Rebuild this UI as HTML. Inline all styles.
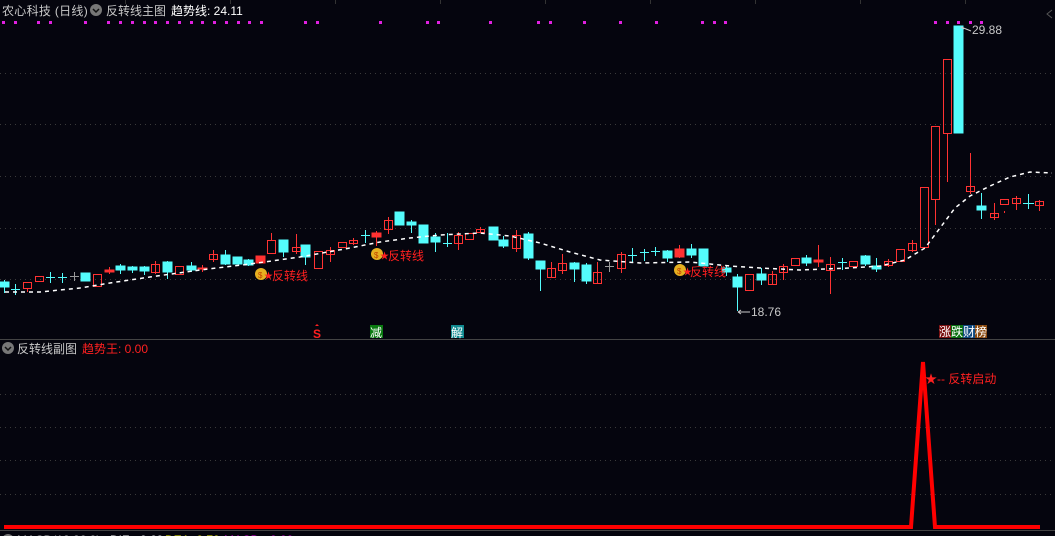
<!DOCTYPE html>
<html><head><meta charset="utf-8"><style>
html,body{margin:0;padding:0;background:#05050e;width:1055px;height:536px;overflow:hidden}
svg{display:block;font-family:"Liberation Sans","Noto Sans CJK SC",sans-serif}
</style></head><body>
<svg width="1055" height="536" viewBox="0 0 1055 536" xmlns="http://www.w3.org/2000/svg">
<rect width="1055" height="536" fill="#05050e"/>
<g stroke="#3a3a3a" stroke-dasharray="1 4" stroke-width="1">
<line x1="0" y1="73.5" x2="1055" y2="73.5"/><line x1="0" y1="124.5" x2="1055" y2="124.5"/>
<line x1="0" y1="176.5" x2="1055" y2="176.5"/><line x1="0" y1="228.5" x2="1055" y2="228.5"/>
<line x1="0" y1="279.5" x2="1055" y2="279.5"/>
<line x1="0" y1="394.5" x2="1055" y2="394.5"/><line x1="0" y1="427.5" x2="1055" y2="427.5"/>
<line x1="0" y1="460.5" x2="1055" y2="460.5"/><line x1="0" y1="494.5" x2="1055" y2="494.5"/>
</g>
<line x1="0" y1="339.5" x2="1055" y2="339.5" stroke="#444" />
<line x1="0" y1="530.5" x2="1055" y2="530.5" stroke="#444" />
<g stroke="#333"><line x1="125.5" y1="0" x2="125.5" y2="4"/><line x1="230.5" y1="0" x2="230.5" y2="4"/><line x1="335.5" y1="0" x2="335.5" y2="4"/><line x1="440.5" y1="0" x2="440.5" y2="4"/><line x1="545.5" y1="0" x2="545.5" y2="4"/><line x1="650.5" y1="0" x2="650.5" y2="4"/><line x1="755.5" y1="0" x2="755.5" y2="4"/><line x1="860.5" y1="0" x2="860.5" y2="4"/><line x1="965.5" y1="0" x2="965.5" y2="4"/></g>

<!-- header -->
<text x="2" y="15" fill="#c8c8c8" font-size="12" letter-spacing="0.3">农心科技 (日线)</text>
<circle cx="96" cy="10" r="6" fill="#777"/><path d="M93 9l3 3 3-3" stroke="#111" stroke-width="1.5" fill="none"/>
<text x="106" y="15" fill="#c8c8c8" font-size="12">反转线主图</text>
<text x="171" y="15" fill="#ffffff" font-size="12">趋势线: 24.11</text>
<g fill="#e020e0">
<rect x="2" y="21" width="3" height="3"/><rect x="14" y="21" width="3" height="3"/><rect x="37" y="21" width="3" height="3"/><rect x="49" y="21" width="3" height="3"/><rect x="84" y="21" width="3" height="3"/><rect x="107" y="21" width="3" height="3"/><rect x="119" y="21" width="3" height="3"/><rect x="131" y="21" width="3" height="3"/><rect x="143" y="21" width="3" height="3"/><rect x="154" y="21" width="3" height="3"/><rect x="166" y="21" width="3" height="3"/><rect x="178" y="21" width="3" height="3"/><rect x="190" y="21" width="3" height="3"/><rect x="201" y="21" width="3" height="3"/><rect x="213" y="21" width="3" height="3"/><rect x="225" y="21" width="3" height="3"/><rect x="237" y="21" width="3" height="3"/><rect x="248" y="21" width="3" height="3"/><rect x="260" y="21" width="3" height="3"/><rect x="304" y="21" width="3" height="3"/><rect x="316" y="21" width="3" height="3"/><rect x="379" y="21" width="3" height="3"/><rect x="426" y="21" width="3" height="3"/><rect x="437" y="21" width="3" height="3"/><rect x="489" y="21" width="3" height="3"/><rect x="537" y="21" width="3" height="3"/><rect x="549" y="21" width="3" height="3"/><rect x="583" y="21" width="3" height="3"/><rect x="619" y="21" width="3" height="3"/><rect x="655" y="21" width="3" height="3"/><rect x="701" y="21" width="3" height="3"/><rect x="713" y="21" width="3" height="3"/><rect x="724" y="21" width="3" height="3"/><rect x="934" y="21" width="3" height="3"/><rect x="946" y="21" width="3" height="3"/><rect x="957" y="21" width="3" height="3"/><rect x="969" y="21" width="3" height="3"/><rect x="980" y="21" width="3" height="3"/>
</g>

<!-- cyan candles -->
<g stroke="#54fcfc" fill="#54fcfc" stroke-width="1">
<line x1="4.5" y1="280" x2="4.5" y2="293"/><rect x="0" y="282" width="9" height="5"/>
<line x1="15.5" y1="284" x2="15.5" y2="295"/><line x1="11" y1="289.5" x2="20" y2="289.5"/>
<line x1="50.5" y1="272" x2="50.5" y2="283"/><line x1="46" y1="277.5" x2="55" y2="277.5"/>
<line x1="62.5" y1="273" x2="62.5" y2="283"/><line x1="58" y1="277.5" x2="67" y2="277.5"/>
<rect x="81" y="273" width="9" height="8"/>
<line x1="120.5" y1="264" x2="120.5" y2="274"/><rect x="116" y="266" width="9" height="4"/>
<line x1="132.5" y1="266" x2="132.5" y2="273"/><rect x="128" y="267" width="9" height="3"/>
<line x1="144.5" y1="266" x2="144.5" y2="275"/><rect x="140" y="267" width="9" height="4"/>
<line x1="167.5" y1="261" x2="167.5" y2="279"/><rect x="163" y="262" width="9" height="10"/>
<line x1="191.5" y1="262" x2="191.5" y2="272"/><rect x="187" y="266" width="9" height="4"/>
<line x1="225.5" y1="250" x2="225.5" y2="265"/><rect x="221" y="255" width="9" height="9"/>
<rect x="233" y="257" width="9" height="7"/>
<line x1="248.5" y1="259" x2="248.5" y2="266"/><rect x="244" y="260" width="9" height="5"/>
<line x1="283.5" y1="240" x2="283.5" y2="257"/><rect x="279" y="240" width="9" height="12"/>
<line x1="305.5" y1="245" x2="305.5" y2="265"/><rect x="301" y="245" width="9" height="12"/>
<line x1="365.5" y1="230" x2="365.5" y2="243"/><line x1="361" y1="235.5" x2="370" y2="235.5"/>
<rect x="395" y="212" width="9" height="13"/>
<line x1="411.5" y1="220" x2="411.5" y2="233"/><rect x="407" y="222" width="9" height="3"/>
<rect x="419" y="225" width="9" height="18"/>
<line x1="435.5" y1="233" x2="435.5" y2="252"/><rect x="431" y="237" width="9" height="5"/>
<line x1="447.5" y1="233" x2="447.5" y2="247"/><line x1="443" y1="243.5" x2="452" y2="243.5"/>
<rect x="489" y="227" width="9" height="13"/>
<line x1="503.5" y1="236" x2="503.5" y2="248"/><rect x="499" y="240" width="9" height="6"/>
<line x1="528.5" y1="232" x2="528.5" y2="260"/><rect x="524" y="234" width="9" height="24"/>
<line x1="540.5" y1="261" x2="540.5" y2="291"/><rect x="536" y="261" width="9" height="8"/>
<line x1="574.5" y1="262" x2="574.5" y2="282"/><rect x="570" y="263" width="9" height="6"/>
<line x1="586.5" y1="263" x2="586.5" y2="284"/><rect x="582" y="265" width="9" height="16"/>
<line x1="632.5" y1="248" x2="632.5" y2="262"/><line x1="628" y1="255.5" x2="637" y2="255.5"/>
<line x1="644.5" y1="249" x2="644.5" y2="261"/><line x1="640" y1="252.5" x2="649" y2="252.5"/>
<line x1="655.5" y1="247" x2="655.5" y2="256"/><line x1="651" y1="251.5" x2="660" y2="251.5"/>
<line x1="667.5" y1="250" x2="667.5" y2="262"/><rect x="663" y="251" width="9" height="7"/>
<line x1="691.5" y1="244" x2="691.5" y2="258"/><rect x="687" y="249" width="9" height="6"/>
<rect x="699" y="249" width="9" height="17"/>
<line x1="726.5" y1="266" x2="726.5" y2="276"/><rect x="722" y="268" width="9" height="4"/>
<line x1="737.5" y1="274" x2="737.5" y2="311"/><rect x="733" y="277" width="9" height="10"/>
<line x1="761.5" y1="268" x2="761.5" y2="285"/><rect x="757" y="274" width="9" height="6"/>
<line x1="806.5" y1="255" x2="806.5" y2="266"/><rect x="802" y="258" width="9" height="5"/>
<line x1="842.5" y1="258" x2="842.5" y2="270"/><line x1="838" y1="262.5" x2="847" y2="262.5"/>
<line x1="865.5" y1="255" x2="865.5" y2="266"/><rect x="861" y="256" width="9" height="8"/>
<line x1="876.5" y1="258" x2="876.5" y2="272"/><rect x="872" y="266" width="9" height="3"/>
<rect x="954" y="26" width="9" height="107"/>
<line x1="981.5" y1="193" x2="981.5" y2="219"/><rect x="977" y="206" width="9" height="4"/>
<line x1="1028.5" y1="194" x2="1028.5" y2="209"/><line x1="1023" y1="203.5" x2="1034" y2="203.5"/>
</g>
<g stroke="#999"><line x1="74.5" y1="272" x2="74.5" y2="281"/><line x1="70" y1="276.5" x2="79" y2="276.5"/>
<line x1="609.5" y1="262" x2="609.5" y2="272"/><line x1="605" y1="266.5" x2="614" y2="266.5"/></g>

<!-- red candles -->
<g stroke="#ff3232" fill="none" stroke-width="1">
<line x1="27.5" y1="288" x2="27.5" y2="292"/><rect x="23.5" y="282.5" width="8" height="6"/>
<rect x="35.5" y="276.5" width="8" height="5"/>
<rect x="93.5" y="274.5" width="8" height="12"/>
<line x1="155.5" y1="261" x2="155.5" y2="274"/><rect x="151.5" y="264.5" width="8" height="8"/>
<rect x="175.5" y="266.5" width="8" height="8"/>
<line x1="213.5" y1="250" x2="213.5" y2="262"/><rect x="209.5" y="254.5" width="8" height="5"/>
<line x1="271.5" y1="233" x2="271.5" y2="240"/><rect x="267.5" y="240.5" width="8" height="13"/>
<line x1="296.5" y1="234" x2="296.5" y2="254"/><rect x="292.5" y="247.5" width="8" height="4"/>
<rect x="314.5" y="251.5" width="8" height="17"/>
<line x1="330.5" y1="247" x2="330.5" y2="262"/><rect x="326.5" y="250.5" width="8" height="4"/>
<rect x="338.5" y="242.5" width="8" height="5"/>
<line x1="353.5" y1="238" x2="353.5" y2="245"/><rect x="349.5" y="240.5" width="8" height="3"/>
<line x1="388.5" y1="217" x2="388.5" y2="234"/><rect x="384.5" y="220.5" width="8" height="9"/>
<line x1="458.5" y1="232" x2="458.5" y2="250"/><rect x="454.5" y="235.5" width="8" height="8"/>
<rect x="465.5" y="233.5" width="8" height="6"/>
<line x1="480.5" y1="227" x2="480.5" y2="233"/><rect x="476.5" y="229.5" width="8" height="3"/>
<line x1="516.5" y1="230" x2="516.5" y2="252"/><rect x="512.5" y="235.5" width="8" height="13"/>
<line x1="551.5" y1="262" x2="551.5" y2="277"/><rect x="547.5" y="268.5" width="8" height="9"/>
<line x1="562.5" y1="254" x2="562.5" y2="274"/><rect x="558.5" y="263.5" width="8" height="7"/>
<line x1="597.5" y1="262" x2="597.5" y2="283"/><rect x="593.5" y="272.5" width="8" height="11"/>
<line x1="621.5" y1="252" x2="621.5" y2="273"/><rect x="617.5" y="254.5" width="8" height="14"/>
<rect x="745.5" y="274.5" width="8" height="16"/>
<line x1="772.5" y1="271" x2="772.5" y2="284"/><rect x="768.5" y="274.5" width="8" height="10"/>
<line x1="783.5" y1="264" x2="783.5" y2="280"/><rect x="779.5" y="266.5" width="8" height="6"/>
<rect x="791.5" y="258.5" width="8" height="7"/>
<line x1="830.5" y1="257" x2="830.5" y2="294"/><rect x="826.5" y="264.5" width="8" height="6"/>
<rect x="849.5" y="261.5" width="8" height="5"/>
<line x1="888.5" y1="259" x2="888.5" y2="267"/><rect x="884.5" y="261.5" width="8" height="4"/>
<rect x="896.5" y="249.5" width="8" height="12"/>
<line x1="912.5" y1="240" x2="912.5" y2="252"/><rect x="908.5" y="243.5" width="8" height="7"/>
<rect x="920.5" y="187.5" width="8" height="60"/>
<line x1="935.5" y1="200" x2="935.5" y2="225"/><rect x="931.5" y="126.5" width="8" height="73"/>
<line x1="947.5" y1="133" x2="947.5" y2="182"/><rect x="943.5" y="59.5" width="8" height="74"/>
<line x1="970.5" y1="153" x2="970.5" y2="194"/><rect x="966.5" y="186.5" width="8" height="5"/>
<line x1="994.5" y1="203" x2="994.5" y2="220"/><rect x="990.5" y="213.5" width="8" height="4"/>
<line x1="1004.5" y1="211" x2="1004.5" y2="213"/><rect x="1000.5" y="199.5" width="8" height="5"/>
<line x1="1016.5" y1="196" x2="1016.5" y2="210"/><rect x="1012.5" y="198.5" width="8" height="5"/>
<line x1="1039.5" y1="200" x2="1039.5" y2="211"/><rect x="1035.5" y="201.5" width="8" height="4"/>
</g>
<g stroke="#ff3232" fill="#ff3232">
<line x1="109.5" y1="267" x2="109.5" y2="274"/><rect x="105" y="270" width="9" height="2"/>
<line x1="202.5" y1="265" x2="202.5" y2="272"/><rect x="198" y="268" width="9" height="1"/>
<rect x="256" y="256" width="9" height="7"/>
<line x1="376.5" y1="231" x2="376.5" y2="246"/><rect x="372" y="233" width="9" height="4"/>
<line x1="679.5" y1="245" x2="679.5" y2="258"/><rect x="675" y="249" width="9" height="8"/>
<line x1="818.5" y1="245" x2="818.5" y2="267"/><rect x="814" y="260" width="9" height="2"/>
</g>

<!-- trend line -->
<polyline fill="none" stroke="#fff" stroke-width="1.5" stroke-dasharray="4 4" points="5,292 40,292 80,288 110,283 150,277 200,270 250,264 300,257 350,248 380,242 410,238 440,235 480,233 510,236 540,243 570,252 600,260 640,263 690,262 730,266 760,268 800,270 850,268 880,266 905,260 925,248 940,228 955,208 970,196 990,186 1010,177 1030,172 1052,173"/>

<!-- signals -->
<g font-size="12" fill="#ff2020">
<circle cx="261" cy="274" r="6" fill="#e6b020"/><text x="258" y="278" fill="#c04000" font-size="8">$</text><text x="264" y="279" font-size="9">★</text><text x="272" y="280">反转线</text>
<circle cx="377" cy="254" r="6" fill="#e6b020"/><text x="374" y="258" fill="#c04000" font-size="8">$</text><text x="380" y="259" font-size="9">★</text><text x="388" y="260">反转线</text>
<circle cx="680" cy="270" r="6" fill="#e6b020"/><text x="677" y="274" fill="#c04000" font-size="8">$</text><text x="683" y="275" font-size="9">★</text><text x="690" y="276">反转线</text>
</g>
<path d="M738 312h12M738 312l3-2M738 312l3 2" stroke="#ccc" fill="none"/>
<text x="751" y="316" fill="#c8c8c8" font-size="12">18.76</text>
<path d="M961 27l10 4M961 27l3 2" stroke="#ccc" fill="none"/>
<text x="972" y="34" fill="#c8c8c8" font-size="12">29.88</text>
<path d="M1052 10l-5 4 5 4" stroke="#555" fill="none"/>

<text x="313" y="338" fill="#ff2020" font-size="12" font-weight="bold">S</text>
<path d="M315 326l2-2 2 2" fill="#ff2020"/>
<rect x="370" y="325" width="13" height="13" fill="#0a7a10"/><text x="370" y="337" fill="#fff" font-size="12">减</text>
<rect x="451" y="325" width="13" height="13" fill="#108a90"/><text x="451" y="337" fill="#fff" font-size="12">解</text>
<rect x="939" y="325" width="12" height="13" fill="#7a1010"/><rect x="951" y="325" width="12" height="13" fill="#0a7010"/><rect x="963" y="325" width="12" height="13" fill="#104a80"/><rect x="975" y="325" width="12" height="13" fill="#8a4a10"/>
<text x="939" y="336" fill="#fff" font-size="12">涨跌财榜</text>

<!-- sub panel -->
<circle cx="8" cy="348" r="6" fill="#777"/><path d="M5 347l3 3 3-3" stroke="#111" stroke-width="1.5" fill="none"/>
<text x="17" y="353" fill="#c8c8c8" font-size="12">反转线副图</text>
<text x="82" y="353" fill="#ff2020" font-size="12">趋势王: 0.00</text>
<polyline fill="none" stroke="#ff0000" stroke-width="4" points="4,527 911,527 923,362 935,527 1040,527"/>
<text x="925" y="383" fill="#ff2020" font-size="12">★-- 反转启动</text>

<!-- bottom -->
<circle cx="8" cy="540" r="6" fill="#777"/>
<text x="17" y="544" fill="#c8c8c8" font-size="12">MACD(12,26,9)</text>
<text x="110" y="544" fill="#fff" font-size="12">DIF: -0.69</text>
<text x="165" y="544" fill="#ffff00" font-size="12">DEA: 0.70</text>
<text x="224" y="544" fill="#ff00ff" font-size="12">MACD: -0.00</text>
</svg>
</body></html>
